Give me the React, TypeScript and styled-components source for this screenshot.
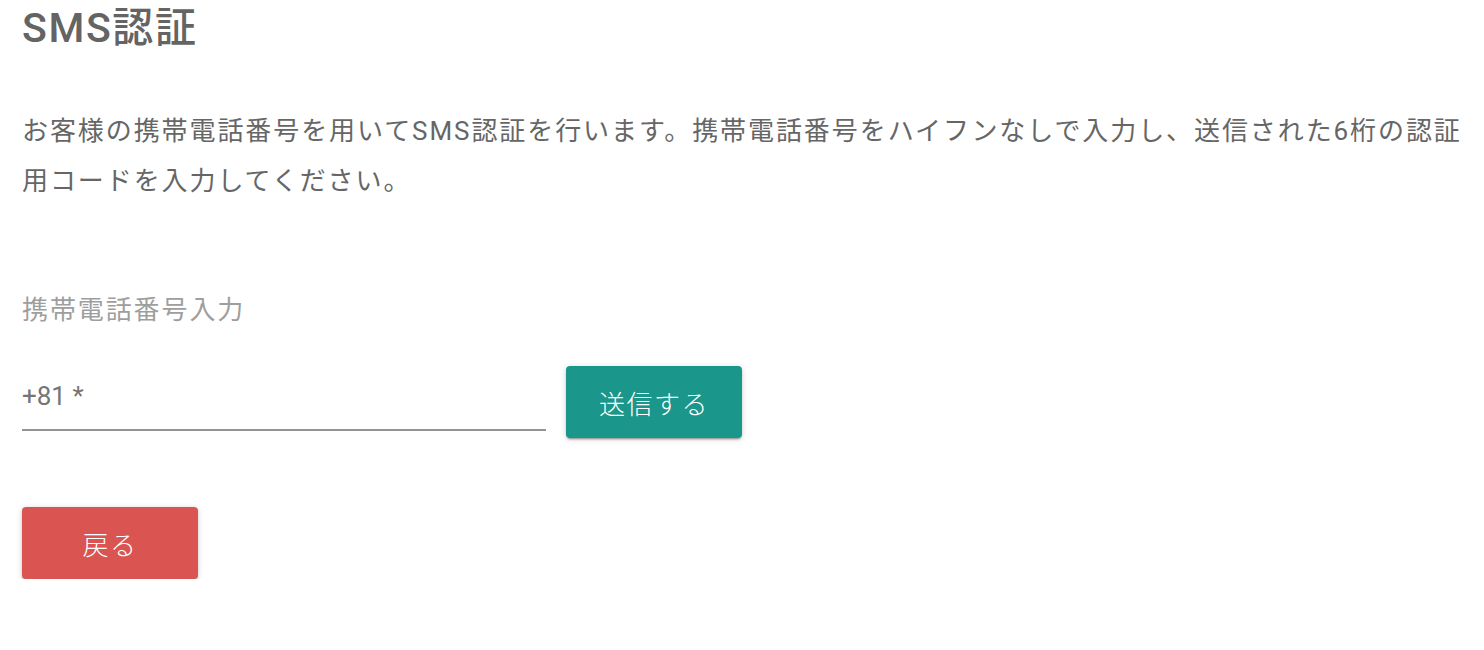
import React from 'react';
import styled, { createGlobalStyle } from 'styled-components';

const GlobalStyle = createGlobalStyle`
  html, body {
    margin: 0;
    background: #ffffff;
  }
  body {
    font-family: Roboto, "Noto Sans CJK JP", sans-serif;
    -webkit-font-smoothing: antialiased;
  }
`;

const Page = styled.div`
  padding: 0 12px 0 22px;
  display: flex;
  flex-direction: column;
  align-items: flex-start;
`;

const Title = styled.h1`
  margin: 0;
  font-size: 41px;
  line-height: 56px;
  font-weight: 500;
  letter-spacing: 1.6px;
  color: #646464;
`;

const Lead = styled.p`
  margin: 50px 0 0;
  font-size: 26px;
  line-height: 50px;
  letter-spacing: 1.92px;
  color: #666666;
`;

const FieldLabel = styled.label`
  margin-top: 86px;
  font-size: 26px;
  line-height: 36px;
  letter-spacing: 1.9px;
  color: #9e9e9e;
`;

const FormRow = styled.div`
  margin-top: 38px;
  display: flex;
  align-items: flex-start;
  gap: 20px;
`;

const PhoneInput = styled.input`
  box-sizing: content-box;
  width: 524px;
  height: 36px;
  padding: 12px 0 15px;
  border: 0;
  border-bottom: 2px solid #949494;
  outline: none;
  background: transparent;
  font-family: inherit;
  font-size: 26px;
  line-height: 36px;
  color: #616161;

  &::placeholder {
    color: #757575;
    opacity: 1;
  }
`;

const ActionButton = styled.button<{ $tone: 'primary' | 'danger' }>`
  width: 176px;
  height: 72px;
  border: 0;
  border-radius: 4px;
  background: ${(p) => (p.$tone === 'primary' ? '#1a968a' : '#da5551')};
  color: #ffffff;
  font-family: inherit;
  font-size: 26px;
  font-weight: 300;
  letter-spacing: 1.5px;
  box-shadow: 0 3px 1px -2px rgba(0, 0, 0, 0.2), 0 2px 2px 0 rgba(0, 0, 0, 0.14),
    0 1px 6px 0 rgba(0, 0, 0, 0.16);
  cursor: pointer;
`;

const BackRow = styled.div`
  margin-top: 69px;
  display: flex;
`;

export default function App() {
  return (
    <>
      <GlobalStyle />
      <Page>
        <Title>SMS認証</Title>
        <Lead>
          お客様の携帯電話番号を用いてSMS認証を行います。携帯電話番号をハイフンなしで入力し、送信された6桁の認証用コードを入力してください。
        </Lead>
        <FieldLabel htmlFor="phone">携帯電話番号入力</FieldLabel>
        <FormRow>
          <PhoneInput id="phone" type="tel" placeholder="+81 *" />
          <ActionButton $tone="primary">送信する</ActionButton>
        </FormRow>
        <BackRow>
          <ActionButton $tone="danger">戻る</ActionButton>
        </BackRow>
      </Page>
    </>
  );
}
